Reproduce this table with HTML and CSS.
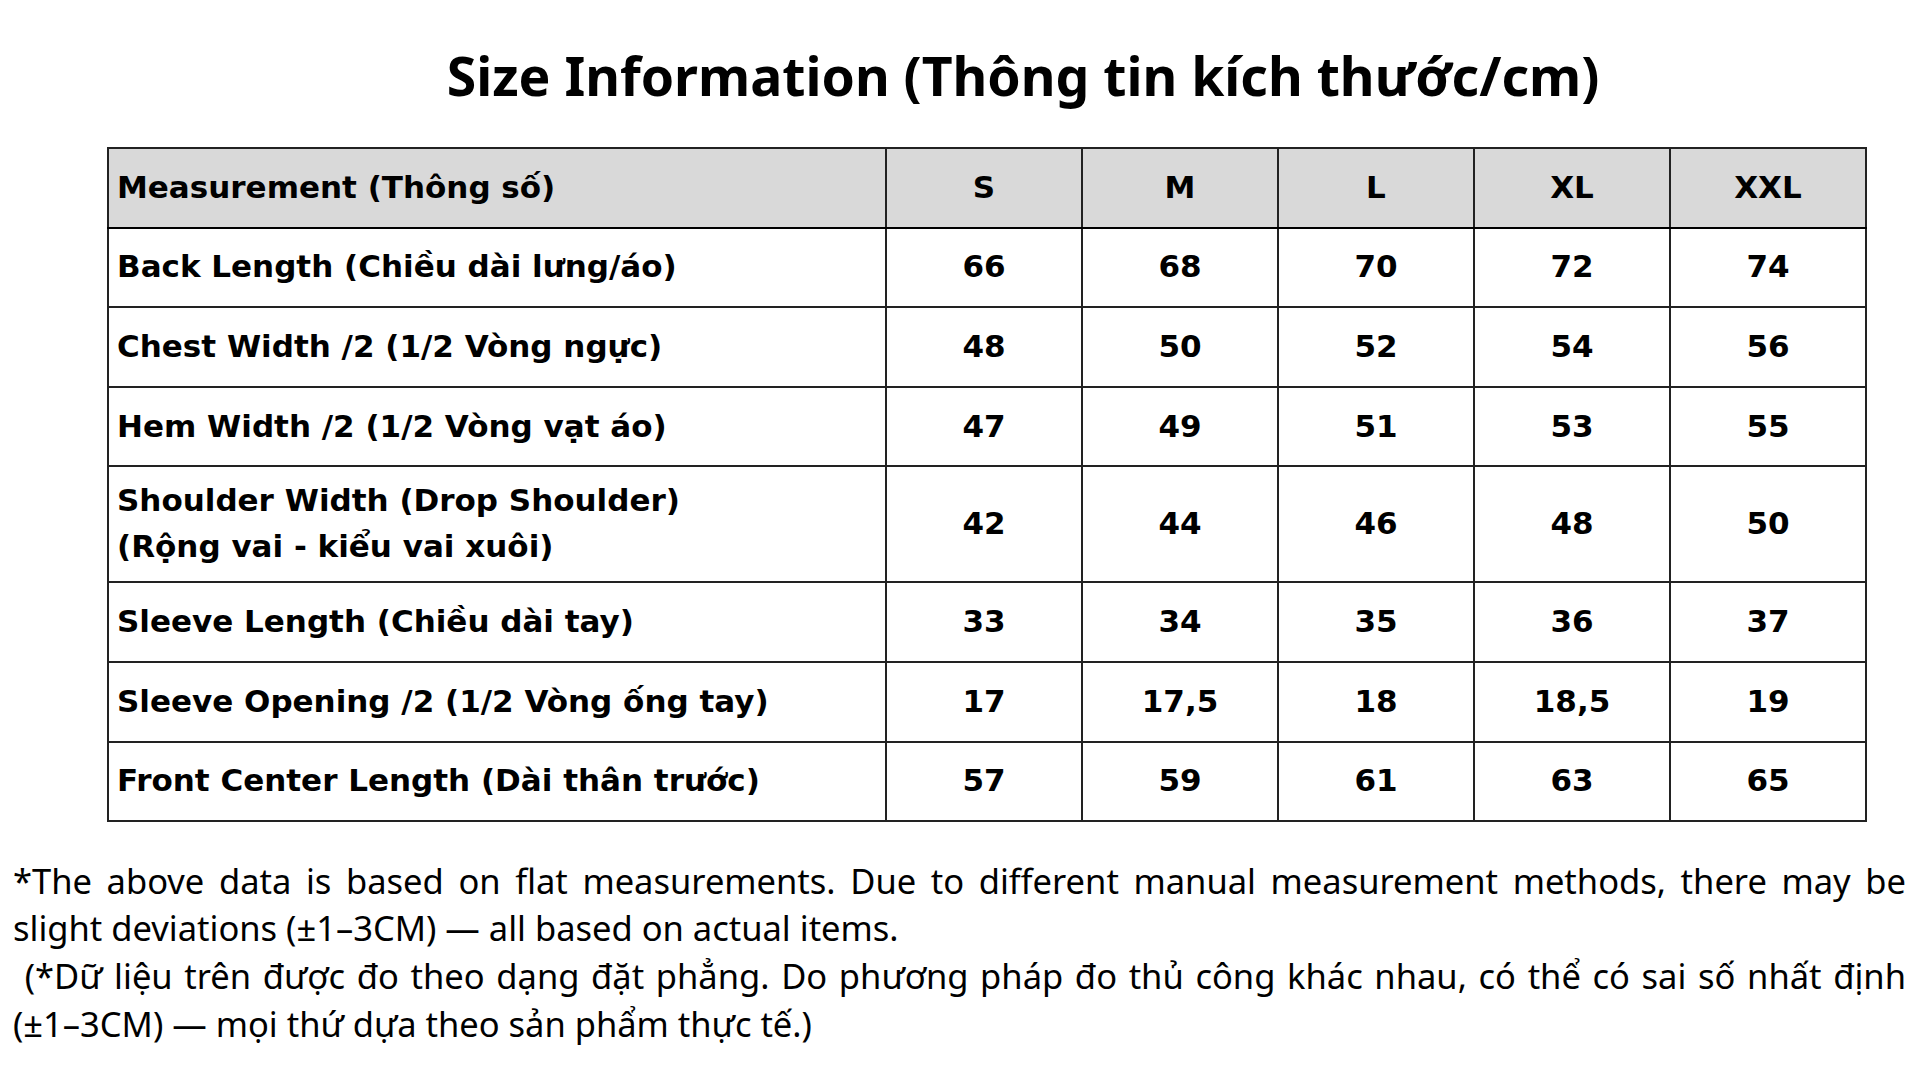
FILE: index.html
```html
<!DOCTYPE html>
<html lang="vi">
<head>
<meta charset="utf-8">
<title>Size Information</title>
<link rel="stylesheet" href="styles.css">
</head>
<body>
<main class="page">
  <h1 class="title">Size Information (Thông tin kích thước/cm)</h1>
  <table class="size-table">
    <colgroup>
      <col class="col-name">
      <col class="col-size"><col class="col-size"><col class="col-size"><col class="col-size"><col class="col-size">
    </colgroup>
    <thead>
      <tr>
        <th class="name">Measurement (Thông số)</th>
        <th>S</th><th>M</th><th>L</th><th>XL</th><th>XXL</th>
      </tr>
    </thead>
    <tbody>
      <tr><td class="name">Back Length (Chiều dài lưng/áo)</td><td>66</td><td>68</td><td>70</td><td>72</td><td>74</td></tr>
      <tr><td class="name">Chest Width /2 (1/2 Vòng ngực)</td><td>48</td><td>50</td><td>52</td><td>54</td><td>56</td></tr>
      <tr><td class="name">Hem Width /2 (1/2 Vòng vạt áo)</td><td>47</td><td>49</td><td>51</td><td>53</td><td>55</td></tr>
      <tr><td class="name">Shoulder Width (Drop Shoulder)<br>(Rộng vai - kiểu vai xuôi)</td><td>42</td><td>44</td><td>46</td><td>48</td><td>50</td></tr>
      <tr><td class="name">Sleeve Length (Chiều dài tay)</td><td>33</td><td>34</td><td>35</td><td>36</td><td>37</td></tr>
      <tr><td class="name">Sleeve Opening /2 (1/2 Vòng ống tay)</td><td>17</td><td>17,5</td><td>18</td><td>18,5</td><td>19</td></tr>
      <tr><td class="name">Front Center Length (Dài thân trước)</td><td>57</td><td>59</td><td>61</td><td>63</td><td>65</td></tr>
    </tbody>
  </table>
  <div class="note">
    <p>*The above data is based on flat measurements. Due to different manual measurement methods, there may be slight deviations (±1–3CM) — all based on actual items.</p>
    <p>&nbsp;(*Dữ liệu trên được đo theo dạng đặt phẳng. Do phương pháp đo thủ công khác nhau, có thể có sai số nhất định (±1–3CM) — mọi thứ dựa theo sản phẩm thực tế.)</p>
  </div>
</main>
</body>
</html>
```
FILE: styles.css
```css
html, body {
  margin: 0;
  padding: 0;
  background: #ffffff;
  color: #000000;
}

.page {
  width: 1920px;
  height: 1080px;
  overflow: hidden;
  box-sizing: border-box;
}

.title {
  margin: 0;
  padding: 43px 0 0 126px;
  height: 147px;
  box-sizing: border-box;
  text-align: center;
  font-family: "Noto Sans", "Open Sans", sans-serif;
  font-weight: 700;
  font-size: 53.5px;
  line-height: 66px;
}

.size-table {
  margin: 0 0 0 107px;
  width: 1760px;
  border-collapse: collapse;
  table-layout: fixed;
  font-family: "DejaVu Sans", Inter, sans-serif;
  font-weight: 700;
  font-size: 31px;
  line-height: 46px;
  border: 2px solid #111111;
}

.col-name { width: 778px; }
.col-size { width: 196px; }

.size-table th,
.size-table td {
  border: 2px solid #222222;
  padding: 10px 8px 12px;
  height: 55.6px;
  text-align: center;
  vertical-align: middle;
  font-weight: 700;
}

.size-table thead th {
  background: #d9d9d9;
  border-bottom-color: #000000;
}

.size-table .name {
  text-align: left;
}

.note {
  margin-top: 34.5px;
  padding: 0 14px 0 13px;
  font-family: "Noto Sans", "Open Sans", sans-serif;
  font-size: 34.5px;
  line-height: 47.7px;
  text-align: justify;
}

.note p {
  margin: 0;
}
```
